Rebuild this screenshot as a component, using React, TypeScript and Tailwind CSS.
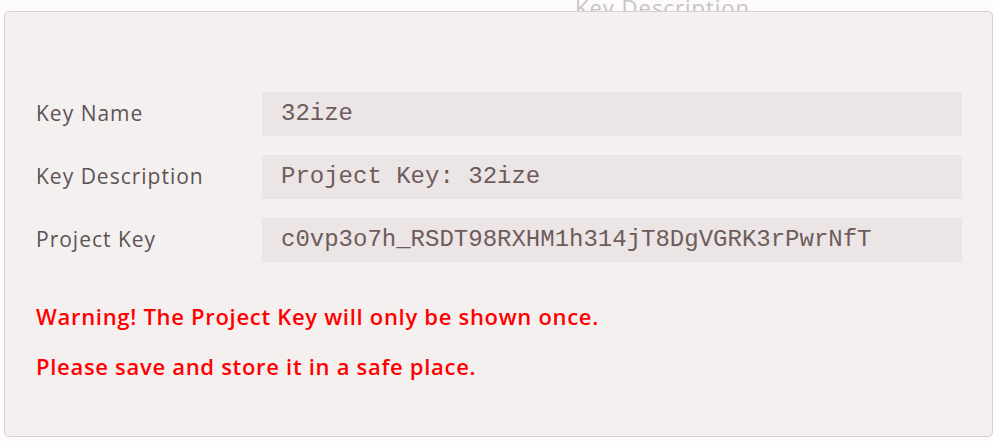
import React from 'react';

const rows = [
  { label: 'Key Name', value: '32ize' },
  { label: 'Key Description', value: 'Project Key: 32ize' },
  { label: 'Project Key', value: 'c0vp3o7h_RSDT98RXHM1h314jT8DgVGRK3rPwrNfT' },
];

export default function App() {
  return (
    <div className="relative h-[441px] w-[993px] overflow-hidden bg-[#fcfafa]" style={{ fontFamily: '"Open Sans", Lato, sans-serif' }}>
      {/* header behind the modal */}
      <div className="absolute left-[575px] top-[-9px] text-[22px] tracking-[1px] text-[#c8c4c4]">Key Description</div>

      <div className="relative ml-[4px] mt-[11px] h-[426px] w-[989px] rounded-[5px] border border-[#d4d0d0] bg-[#f5f0f0] pl-[31px] pr-[30px] pt-[80px]">
        <div className="flex flex-col gap-[19px]">
          {rows.map((r) => (
            <div key={r.label} className="flex items-center">
              <div className="w-[226px] text-[21px] tracking-[1px] text-[#5c5353]">{r.label}</div>
              <div
                className="flex h-[44px] flex-1 items-center bg-[#ebe5e5] pl-[19px] text-[24px] text-[#6e5c5c]"
                style={{ fontFamily: '"Liberation Mono", "DejaVu Sans Mono", monospace' }}
              >
                {r.value}
              </div>
            </div>
          ))}
        </div>

        <div className="mt-[40px] flex flex-col gap-[22px] text-[22px] font-semibold leading-[28px] tracking-[0.7px] text-[#ff0000]">
          <p>Warning! The Project Key will only be shown once.</p>
          <p>Please save and store it in a safe place.</p>
        </div>
      </div>
    </div>
  );
}
